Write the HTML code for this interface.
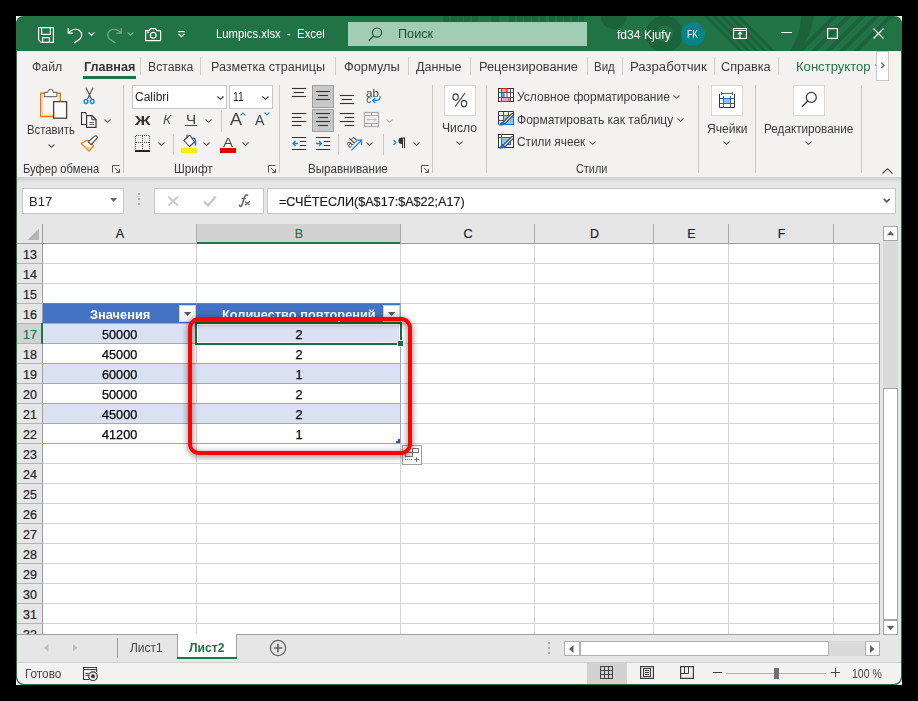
<!DOCTYPE html><html><head><meta charset="utf-8"><style>html,body{margin:0;padding:0;}body{width:918px;height:701px;overflow:hidden;background:#000;position:relative;font-family:"Liberation Sans",sans-serif;}svg{overflow:visible}</style></head><body><div style="position:absolute;left:16px;top:16px;width:886px;height:669px;background:#f2f2f2;"></div>
<div style="position:absolute;left:16px;top:16px;width:886px;height:669px;border-radius:8px;background:#217346;overflow:hidden"></div>
<div style="position:absolute;left:17px;top:51px;width:884px;height:633px;border-radius:0 0 7px 7px;background:#f3f2f1;overflow:hidden"></div>
<svg style="position:absolute;left:0;top:0" width="918" height="60"><defs><clipPath id="tb"><rect x="16" y="16" width="886" height="35"/></clipPath><clipPath id="tb2"><circle cx="735" cy="34" r="40"/></clipPath></defs><g clip-path="url(#tb)"><circle cx="613.7" cy="16" r="13" fill="#1c633b"/><circle cx="664.5" cy="34" r="13.5" fill="none" stroke="#1c633b" stroke-width="10"/><path d="M704 16 h4 l35 35 h-4 z" fill="#1c633b"/><path d="M712 16 h4 l35 35 h-4 z" fill="#1c633b"/><path d="M720 16 h4 l35 35 h-4 z" fill="#1c633b"/><path d="M728 16 h4 l35 35 h-4 z" fill="#1c633b"/><path d="M736 16 h4 l35 35 h-4 z" fill="#1c633b"/><path d="M801 16 h13 C812 30 806 42 800 51 h-10 C797 40 801 28 801 16 z" fill="#1c633b"/><path d="M832 16 h6 l-35 35 h-6 z" fill="#1c633b"/><path d="M846 16 h6 l-35 35 h-6 z" fill="#1c633b"/><path d="M860 16 h6 l-35 35 h-6 z" fill="#1c633b"/><path d="M874 16 h6 l-35 35 h-6 z" fill="#1c633b"/><path d="M888 16 h6 l-35 35 h-6 z" fill="#1c633b"/><rect x="443" y="16" width="6" height="6" fill="#1c633b" opacity="0.7"/><rect x="451" y="16" width="6" height="6" fill="#1c633b" opacity="0.7"/><rect x="458" y="16" width="5" height="6" fill="#1c633b" opacity="0.7"/><rect x="464" y="16" width="6" height="6" fill="#1c633b" opacity="0.7"/><rect x="472" y="16" width="6" height="6" fill="#1c633b" opacity="0.7"/><rect x="491" y="16" width="8" height="6" fill="#1c633b" opacity="0.7"/><rect x="509" y="16" width="6" height="6" fill="#1c633b" opacity="0.7"/><rect x="517" y="16" width="6" height="6" fill="#1c633b" opacity="0.7"/><rect x="524" y="16" width="7" height="6" fill="#1c633b" opacity="0.7"/><rect x="532" y="16" width="6" height="6" fill="#1c633b" opacity="0.7"/><rect x="540" y="16" width="6" height="6" fill="#1c633b" opacity="0.7"/><rect x="549" y="16" width="6" height="6" fill="#1c633b" opacity="0.7"/><rect x="557" y="16" width="6" height="6" fill="#1c633b" opacity="0.7"/><rect x="564" y="16" width="6" height="6" fill="#1c633b" opacity="0.7"/><rect x="572" y="16" width="6" height="6" fill="#1c633b" opacity="0.7"/><rect x="579" y="16" width="5" height="6" fill="#1c633b" opacity="0.7"/></g></svg>
<svg style="position:absolute;left:38px;top:27px;" width="17" height="17" viewBox="0 0 17 17"><path d="M0.6 0.6 H15.4 V15.4 H3.2 L0.6 12.8 Z" fill="none" stroke="#fff" stroke-width="1.2"/><path d="M3.6 0.6 V7.4 H12.4 V0.6 M4.6 15.4 V10.6 H11.4 V15.4" fill="none" stroke="#fff" stroke-width="1.2"/></svg>
<svg style="position:absolute;left:67px;top:27px;" width="16" height="17" viewBox="0 0 16 17"><path d="M1.2 1 V6.2 H6.2" fill="none" stroke="#fff" stroke-width="1.2"/><path d="M1.5 6 C4 2.5 9 1 12.5 3.5 C15.5 6 15 9.5 13 12 L7 16" fill="none" stroke="#fff" stroke-width="1.2"/></svg>
<svg style="position:absolute;left:88px;top:32px;" width="7" height="4" viewBox="0 0 7 4"><path d="M0.5 0.5 L3.5 3.2 L6.5 0.5" fill="none" stroke="#fff" stroke-width="1.1"/></svg>
<svg style="position:absolute;left:107px;top:27px;opacity:.8" width="16" height="17" viewBox="0 0 16 17"><path d="M14.3 1 V6.2 H9.3" fill="none" stroke="#8fbba0" stroke-width="1.2"/><path d="M14 6 C11.5 2.5 6.5 1 3 3.5 C0 6 0.5 9.5 2.5 12 L8.5 16" fill="none" stroke="#8fbba0" stroke-width="1.2"/></svg>
<svg style="position:absolute;left:127px;top:32px;" width="7" height="4" viewBox="0 0 7 4"><path d="M0.5 0.5 L3.5 3.2 L6.5 0.5" fill="none" stroke="#7fae92" stroke-width="1.1"/></svg>
<svg style="position:absolute;left:145px;top:28px;" width="17" height="14" viewBox="0 0 17 14"><path d="M0.6 2.6 H4 L5.5 0.6 H10.5 L12 2.6 H15.6 V12.6 H0.6 Z" fill="none" stroke="#fff" stroke-width="1.2"/><circle cx="8.2" cy="7.3" r="2.9" fill="none" stroke="#fff" stroke-width="1.3"/><rect x="2.3" y="3.6" width="1.6" height="1.6" fill="#fff"/></svg>
<svg style="position:absolute;left:178px;top:31px;" width="8" height="7" viewBox="0 0 8 7"><path d="M0 0.6 H7" stroke="#fff" stroke-width="1.2"/><path d="M0.6 2.8 L3.5 5.6 L6.4 2.8" fill="none" stroke="#fff" stroke-width="1.2"/></svg>
<div style="position:absolute;left:216.03px;top:28.42px;font-family:'Liberation Sans',sans-serif;font-size:12.5px;line-height:12.5px;font-weight:400;font-style:normal;color:#ffffff;white-space:pre;transform:scaleX(0.9050);transform-origin:0 0;">Lumpics.xlsx  -  Excel</div>
<div style="position:absolute;left:348px;top:22px;width:239px;height:24px;background:#a0cdb4;"></div>
<svg style="position:absolute;left:368px;top:27px;" width="15" height="15" viewBox="0 0 15 15"><circle cx="9" cy="5.6" r="4.6" fill="none" stroke="#1f5537" stroke-width="1.2"/><path d="M5.8 8.8 L0.8 13.8" stroke="#1f5537" stroke-width="1.3"/></svg>
<div style="position:absolute;left:398.23px;top:28.42px;font-family:'Liberation Sans',sans-serif;font-size:12.5px;line-height:12.5px;font-weight:400;font-style:normal;color:#1e4d33;white-space:pre;transform:scaleX(1.0147);transform-origin:0 0;">Поиск</div>
<div style="position:absolute;left:616.62px;top:29.32px;font-family:'Liberation Sans',sans-serif;font-size:12.5px;line-height:12.5px;font-weight:400;font-style:normal;color:#ffffff;white-space:pre;transform:scaleX(0.9668);transform-origin:0 0;">fd34 Kjufy</div>
<div style="position:absolute;left:681px;top:22px;width:24px;height:24px;border-radius:50%;background:#068387"></div>
<div style="position:absolute;left:687.48px;top:29.11px;font-family:'Liberation Sans',sans-serif;font-size:10.5px;line-height:10.5px;font-weight:400;font-style:normal;color:#eef8f8;white-space:pre;transform:scaleX(0.8292);transform-origin:0 0;">FK</div>
<svg style="position:absolute;left:733px;top:28px;" width="14" height="11" viewBox="0 0 14 11"><rect x="0.55" y="0.55" width="12.9" height="9.9" fill="none" stroke="#fff" stroke-width="1.1"/><path d="M0.5 2.5 H13.5" stroke="#fff" stroke-width="1"/><path d="M7 10 V4.3 M4.9 6.4 L7 4.3 L9.1 6.4" fill="none" stroke="#fff" stroke-width="1.1"/></svg>
<div style="position:absolute;left:781px;top:32px;width:11px;height:1px;background:#fff;"></div>
<svg style="position:absolute;left:827px;top:28px;" width="11" height="11" viewBox="0 0 11 11"><rect x="0.6" y="0.6" width="9.8" height="9.8" fill="none" stroke="#fff" stroke-width="1.2"/></svg>
<svg style="position:absolute;left:873px;top:28px;" width="11" height="11" viewBox="0 0 11 11"><path d="M0.5 0.5 L10.5 10.5 M10.5 0.5 L0.5 10.5" stroke="#fff" stroke-width="1.2"/></svg>
<div style="position:absolute;left:31.62px;top:61.42px;font-family:'Liberation Sans',sans-serif;font-size:12.5px;line-height:12.5px;font-weight:400;font-style:normal;color:#3b3b3b;white-space:pre;transform:scaleX(0.9842);transform-origin:0 0;">Файл</div>
<div style="position:absolute;left:83.62px;top:61.42px;font-family:'Liberation Sans',sans-serif;font-size:12.5px;line-height:12.5px;font-weight:700;font-style:normal;color:#333;white-space:pre;transform:scaleX(1.0080);transform-origin:0 0;">Главная</div>
<div style="position:absolute;left:83px;top:76px;width:53px;height:3px;background:#217346;"></div>
<div style="position:absolute;left:140px;top:57px;width:1px;height:18px;background:#d0d0d0;"></div>
<div style="position:absolute;left:200px;top:57px;width:1px;height:18px;background:#d0d0d0;"></div>
<div style="position:absolute;left:335px;top:57px;width:1px;height:18px;background:#d0d0d0;"></div>
<div style="position:absolute;left:408px;top:57px;width:1px;height:18px;background:#d0d0d0;"></div>
<div style="position:absolute;left:470px;top:57px;width:1px;height:18px;background:#d0d0d0;"></div>
<div style="position:absolute;left:587px;top:57px;width:1px;height:18px;background:#d0d0d0;"></div>
<div style="position:absolute;left:622px;top:57px;width:1px;height:18px;background:#d0d0d0;"></div>
<div style="position:absolute;left:714px;top:57px;width:1px;height:18px;background:#d0d0d0;"></div>
<div style="position:absolute;left:778px;top:57px;width:1px;height:18px;background:#d0d0d0;"></div>
<div style="position:absolute;left:147.62px;top:61.42px;font-family:'Liberation Sans',sans-serif;font-size:12.5px;line-height:12.5px;font-weight:400;font-style:normal;color:#3b3b3b;white-space:pre;transform:scaleX(0.9759);transform-origin:0 0;">Вставка</div>
<div style="position:absolute;left:211.03px;top:61.42px;font-family:'Liberation Sans',sans-serif;font-size:12.5px;line-height:12.5px;font-weight:400;font-style:normal;color:#3b3b3b;white-space:pre;transform:scaleX(1.0057);transform-origin:0 0;">Разметка страницы</div>
<div style="position:absolute;left:344.02px;top:61.42px;font-family:'Liberation Sans',sans-serif;font-size:12.5px;line-height:12.5px;font-weight:400;font-style:normal;color:#3b3b3b;white-space:pre;transform:scaleX(1.0247);transform-origin:0 0;">Формулы</div>
<div style="position:absolute;left:415.93px;top:61.42px;font-family:'Liberation Sans',sans-serif;font-size:12.5px;line-height:12.5px;font-weight:400;font-style:normal;color:#3b3b3b;white-space:pre;transform:scaleX(1.0062);transform-origin:0 0;">Данные</div>
<div style="position:absolute;left:479.02px;top:61.42px;font-family:'Liberation Sans',sans-serif;font-size:12.5px;line-height:12.5px;font-weight:400;font-style:normal;color:#3b3b3b;white-space:pre;transform:scaleX(1.0251);transform-origin:0 0;">Рецензирование</div>
<div style="position:absolute;left:594.23px;top:61.42px;font-family:'Liberation Sans',sans-serif;font-size:12.5px;line-height:12.5px;font-weight:400;font-style:normal;color:#3b3b3b;white-space:pre;transform:scaleX(0.9171);transform-origin:0 0;">Вид</div>
<div style="position:absolute;left:629.83px;top:61.42px;font-family:'Liberation Sans',sans-serif;font-size:12.5px;line-height:12.5px;font-weight:400;font-style:normal;color:#3b3b3b;white-space:pre;transform:scaleX(1.0514);transform-origin:0 0;">Разработчик</div>
<div style="position:absolute;left:721.12px;top:61.42px;font-family:'Liberation Sans',sans-serif;font-size:12.5px;line-height:12.5px;font-weight:400;font-style:normal;color:#3b3b3b;white-space:pre;transform:scaleX(1.0123);transform-origin:0 0;">Справка</div>
<div style="position:absolute;left:796.02px;top:61.42px;font-family:'Liberation Sans',sans-serif;font-size:12.5px;line-height:12.5px;font-weight:400;font-style:normal;color:#217346;white-space:pre;transform:scaleX(1.0459);transform-origin:0 0;">Конструктор</div>
<div style="position:absolute;left:875px;top:64px;width:2px;height:2px;background:#7fb095;"></div>
<div style="position:absolute;left:876px;top:51px;width:13px;height:30px;background:#ffffff;border:1px solid #c8c8c8;box-sizing:border-box;"></div>
<svg style="position:absolute;left:880px;top:62px;" width="6" height="7" viewBox="0 0 6 7"><path d="M1.2 0.6 L4 3.3 L1.2 6" fill="none" stroke="#555" stroke-width="1.2"/></svg>
<div style="position:absolute;left:123px;top:85px;width:1px;height:88px;background:#c8c8c8;"></div>
<div style="position:absolute;left:279px;top:85px;width:1px;height:88px;background:#c8c8c8;"></div>
<div style="position:absolute;left:432px;top:85px;width:1px;height:88px;background:#c8c8c8;"></div>
<div style="position:absolute;left:486px;top:85px;width:1px;height:88px;background:#c8c8c8;"></div>
<div style="position:absolute;left:698px;top:85px;width:1px;height:88px;background:#c8c8c8;"></div>
<div style="position:absolute;left:755px;top:85px;width:1px;height:88px;background:#c8c8c8;"></div>
<div style="position:absolute;left:861px;top:85px;width:1px;height:88px;background:#c8c8c8;"></div>
<div style="position:absolute;left:23.24px;top:163.44px;font-family:'Liberation Sans',sans-serif;font-size:12px;line-height:12px;font-weight:400;font-style:normal;color:#3b3b3b;white-space:pre;transform:scaleX(0.9335);transform-origin:0 0;">Буфер обмена</div>
<div style="position:absolute;left:174.24px;top:163.44px;font-family:'Liberation Sans',sans-serif;font-size:12px;line-height:12px;font-weight:400;font-style:normal;color:#3b3b3b;white-space:pre;transform:scaleX(0.9806);transform-origin:0 0;">Шрифт</div>
<div style="position:absolute;left:307.94px;top:163.44px;font-family:'Liberation Sans',sans-serif;font-size:12px;line-height:12px;font-weight:400;font-style:normal;color:#3b3b3b;white-space:pre;transform:scaleX(0.9662);transform-origin:0 0;">Выравнивание</div>
<div style="position:absolute;left:576.24px;top:163.44px;font-family:'Liberation Sans',sans-serif;font-size:12px;line-height:12px;font-weight:400;font-style:normal;color:#3b3b3b;white-space:pre;transform:scaleX(0.9087);transform-origin:0 0;">Стили</div>
<svg style="position:absolute;left:112px;top:165px;" width="9" height="9" viewBox="0 0 9 9"><path d="M0.5 7.5 V0.5 H7.5" fill="none" stroke="#555" stroke-width="1"/><path d="M3 3 L7.5 7.5 M4 7.5 H7.5 V4" fill="none" stroke="#555" stroke-width="1"/></svg>
<svg style="position:absolute;left:268px;top:165px;" width="9" height="9" viewBox="0 0 9 9"><path d="M0.5 7.5 V0.5 H7.5" fill="none" stroke="#555" stroke-width="1"/><path d="M3 3 L7.5 7.5 M4 7.5 H7.5 V4" fill="none" stroke="#555" stroke-width="1"/></svg>
<svg style="position:absolute;left:421px;top:165px;" width="9" height="9" viewBox="0 0 9 9"><path d="M0.5 7.5 V0.5 H7.5" fill="none" stroke="#555" stroke-width="1"/><path d="M3 3 L7.5 7.5 M4 7.5 H7.5 V4" fill="none" stroke="#555" stroke-width="1"/></svg>
<svg style="position:absolute;left:39px;top:88px;" width="30" height="33" viewBox="0 0 30 33"><rect x="1.7" y="5.2" width="19.6" height="23.3" fill="#f8f8f8" stroke="#e5740c" stroke-width="1.4"/><path d="M3.2 6.5 V27.2 H20 V6.5" fill="none" stroke="#f8d68a" stroke-width="1.4"/><path d="M5.4 8.6 V4.4 H8.6 Q9.6 1.3 11.6 1.3 Q13.6 1.3 14.6 4.4 H17.8 V8.6 Z" fill="#fff" stroke="#777" stroke-width="1.1"/><rect x="14.6" y="13.6" width="13" height="16.6" fill="#fafafa" stroke="#444" stroke-width="1.3"/></svg>
<div style="position:absolute;left:27.02px;top:124.12px;font-family:'Liberation Sans',sans-serif;font-size:12.5px;line-height:12.5px;font-weight:400;font-style:normal;color:#3b3b3b;white-space:pre;transform:scaleX(0.9028);transform-origin:0 0;">Вставить</div>
<svg style="position:absolute;left:48px;top:144px;" width="7" height="4" viewBox="0 0 7 4"><path d="M0.5 0.5 L3.5 3.3 L6.5 0.5" fill="none" stroke="#555" stroke-width="1.1"/></svg>
<svg style="position:absolute;left:83px;top:87px;" width="13" height="18" viewBox="0 0 13 18"><path d="M3 0.8 L8.6 12.3 M10 0.8 L4.4 12.3" stroke="#555" stroke-width="1.2"/><circle cx="3" cy="14.5" r="1.9" fill="#fff" stroke="#2b88d8" stroke-width="1.5"/><circle cx="9.2" cy="14.5" r="1.9" fill="#fff" stroke="#2b88d8" stroke-width="1.5"/></svg>
<svg style="position:absolute;left:80px;top:111px;" width="18" height="18" viewBox="0 0 18 18"><path d="M6.5 3.6 L5.5 1.5 H1.5 V13.5 H6" fill="none" stroke="#333" stroke-width="1.1"/><path d="M6.6 4.6 H12 L16 8.6 V16.4 H6.6 Z" fill="#fff" stroke="#333" stroke-width="1.2"/><path d="M11.8 4.6 V8.8 H16" fill="none" stroke="#333" stroke-width="1"/><path d="M9.5 11.5 H14 M9.5 13.5 H14" stroke="#555" stroke-width="1"/></svg>
<svg style="position:absolute;left:104px;top:119px;" width="7" height="4" viewBox="0 0 7 4"><path d="M0.5 0.5 L3.5 3.3 L6.5 0.5" fill="none" stroke="#555" stroke-width="1.1"/></svg>
<svg style="position:absolute;left:80px;top:135px;" width="19" height="18" viewBox="0 0 19 18"><path d="M1.3 8.4 L7.5 5 L13.6 10.8 L9 16 Z" fill="#fff" stroke="#e8861e" stroke-width="1.4" stroke-linejoin="round"/><path d="M5 12 L10 11.5 L9 15 Z" fill="#f7c98a"/><path d="M8.2 6.8 L14.6 1.2 Q16 0.2 17 1.4 Q17.8 2.6 16.6 3.6 L11.2 9.6 Z" fill="#fff" stroke="#444" stroke-width="1.1"/></svg>
<div style="position:absolute;left:132px;top:85px;width:95px;height:24px;background:#ffffff;border:1px solid #c6c6c6;box-sizing:border-box;"></div>
<div style="position:absolute;left:135.32px;top:91.42px;font-family:'Liberation Sans',sans-serif;font-size:12.5px;line-height:12.5px;font-weight:400;font-style:normal;color:#262626;white-space:pre;transform:scaleX(0.9608);transform-origin:0 0;">Calibri</div>
<svg style="position:absolute;left:217px;top:96px;" width="7" height="4" viewBox="0 0 7 4"><path d="M0.5 0.5 L3.5 3.3 L6.5 0.5" fill="none" stroke="#333" stroke-width="1.1"/></svg>
<div style="position:absolute;left:229px;top:85px;width:44px;height:24px;background:#ffffff;border:1px solid #c6c6c6;box-sizing:border-box;"></div>
<div style="position:absolute;left:232.62px;top:91.42px;font-family:'Liberation Sans',sans-serif;font-size:12.5px;line-height:12.5px;font-weight:400;font-style:normal;color:#262626;white-space:pre;transform:scaleX(0.8279);transform-origin:0 0;">11</div>
<svg style="position:absolute;left:262px;top:96px;" width="7" height="4" viewBox="0 0 7 4"><path d="M0.5 0.5 L3.5 3.3 L6.5 0.5" fill="none" stroke="#333" stroke-width="1.1"/></svg>
<div style="position:absolute;left:135.31px;top:113.50px;font-family:'Liberation Sans',sans-serif;font-size:13px;line-height:13px;font-weight:700;font-style:normal;color:#333;white-space:pre;transform:scaleX(1.3260);transform-origin:0 0;">Ж</div>
<div style="position:absolute;left:162.62px;top:113.92px;font-family:'Liberation Sans',sans-serif;font-size:12.5px;line-height:12.5px;font-weight:400;font-style:italic;color:#555;white-space:pre;transform:scaleX(1.1051);transform-origin:0 0;">К</div>
<div style="position:absolute;left:185.62px;top:113.92px;font-family:'Liberation Sans',sans-serif;font-size:12.5px;line-height:12.5px;font-weight:400;font-style:normal;color:#444;white-space:pre;transform:scaleX(1.2285);transform-origin:0 0;">Ч</div>
<div style="position:absolute;left:185px;top:125px;width:12px;height:1px;background:#444;"></div>
<svg style="position:absolute;left:205px;top:119px;" width="7" height="4" viewBox="0 0 7 4"><path d="M0.5 0.5 L3.5 3.3 L6.5 0.5" fill="none" stroke="#555" stroke-width="1.1"/></svg>
<div style="position:absolute;left:221px;top:110px;width:1px;height:22px;background:#c8c8c8;"></div>
<div style="position:absolute;left:229.50px;top:111.33px;font-family:'Liberation Sans',sans-serif;font-size:16.5px;line-height:16.5px;font-weight:400;font-style:normal;color:#444;white-space:pre;transform:scaleX(1.0885);transform-origin:0 0;">A</div>
<svg style="position:absolute;left:240px;top:112px;" width="6" height="4" viewBox="0 0 6 4"><path d="M0.5 3.5 L3 1 L5.5 3.5" fill="none" stroke="#2b88d8" stroke-width="1.1"/></svg>
<div style="position:absolute;left:255.37px;top:113.03px;font-family:'Liberation Sans',sans-serif;font-size:14.5px;line-height:14.5px;font-weight:400;font-style:normal;color:#444;white-space:pre;transform:scaleX(0.9688);transform-origin:0 0;">A</div>
<svg style="position:absolute;left:264px;top:112px;" width="6" height="4" viewBox="0 0 6 4"><path d="M0.5 0.5 L3 3 L5.5 0.5" fill="none" stroke="#2b88d8" stroke-width="1.1"/></svg>
<svg style="position:absolute;left:135px;top:135px;" width="16" height="17" viewBox="0 0 16 17"><g shape-rendering="crispEdges" fill="none" stroke="#444" stroke-width="1" stroke-dasharray="1 1"><path d="M0.5 1 V14 M14.5 1 V14 M1 0.5 H15 M7.5 1 V14 M1 7.5 H15"/></g><path d="M0 15.5 H15" stroke="#222" stroke-width="2" shape-rendering="crispEdges"/></svg>
<svg style="position:absolute;left:158px;top:142px;" width="7" height="4" viewBox="0 0 7 4"><path d="M0.5 0.5 L3.5 3.3 L6.5 0.5" fill="none" stroke="#555" stroke-width="1.1"/></svg>
<div style="position:absolute;left:173px;top:134px;width:1px;height:21px;background:#c8c8c8;"></div>
<svg style="position:absolute;left:181px;top:134px;" width="17" height="15" viewBox="0 0 17 15"><path d="M3 6.5 L7.5 2 Q8.5 0.8 9.5 2 L13.5 8 L8.5 12.5 Z" fill="#fff" stroke="#444" stroke-width="1.1" stroke-linejoin="round"/><path d="M6 3.5 V0.8" stroke="#444" stroke-width="1.1"/><path d="M10.5 4.5 Q13.5 3.5 14.5 6 V11.5" fill="none" stroke="#1f6fc5" stroke-width="1.4"/></svg>
<div style="position:absolute;left:181px;top:148px;width:16px;height:5px;background:#ffef00;"></div>
<svg style="position:absolute;left:203px;top:142px;" width="7" height="4" viewBox="0 0 7 4"><path d="M0.5 0.5 L3.5 3.3 L6.5 0.5" fill="none" stroke="#555" stroke-width="1.1"/></svg>
<div style="position:absolute;left:223.31px;top:135.70px;font-family:'Liberation Sans',sans-serif;font-size:13px;line-height:13px;font-weight:400;font-style:normal;color:#444;white-space:pre;transform:scaleX(1.1624);transform-origin:0 0;">A</div>
<div style="position:absolute;left:220px;top:148px;width:16px;height:5px;background:#e00000;"></div>
<svg style="position:absolute;left:242px;top:142px;" width="7" height="4" viewBox="0 0 7 4"><path d="M0.5 0.5 L3.5 3.3 L6.5 0.5" fill="none" stroke="#555" stroke-width="1.1"/></svg>
<div style="position:absolute;left:312px;top:85px;width:22px;height:23px;background:#c8c8c8;border:1px solid #9e9e9e;box-sizing:border-box;"></div>
<div style="position:absolute;left:312px;top:109px;width:22px;height:23px;background:#c8c8c8;border:1px solid #9e9e9e;box-sizing:border-box;"></div>
<svg style="position:absolute;left:292px;top:88px;" width="16" height="16" viewBox="0 0 16 16"><path d="M0 0.5 H14" stroke="#333" stroke-width="1.1"/><path d="M2 4.5 H12" stroke="#333" stroke-width="1.1"/><path d="M0 8.5 H14" stroke="#333" stroke-width="1.1"/></svg>
<svg style="position:absolute;left:316px;top:91px;" width="16" height="16" viewBox="0 0 16 16"><path d="M0 0.5 H14" stroke="#333" stroke-width="1.1"/><path d="M2 4.5 H12" stroke="#333" stroke-width="1.1"/><path d="M0 8.5 H14" stroke="#333" stroke-width="1.1"/></svg>
<svg style="position:absolute;left:340px;top:95px;" width="16" height="16" viewBox="0 0 16 16"><path d="M0 0.5 H14" stroke="#333" stroke-width="1.1"/><path d="M2 4.5 H12" stroke="#333" stroke-width="1.1"/><path d="M0 8.5 H14" stroke="#333" stroke-width="1.1"/></svg>
<div style="position:absolute;left:365.70px;top:88.53px;font-family:'Liberation Sans',sans-serif;font-size:10px;line-height:10px;font-weight:400;font-style:normal;color:#444;white-space:pre;transform:scaleX(1.1685);transform-origin:0 0;">ab</div>
<div style="position:absolute;left:366.30px;top:95.03px;font-family:'Liberation Sans',sans-serif;font-size:10px;line-height:10px;font-weight:400;font-style:normal;color:#444;white-space:pre;">c</div>
<svg style="position:absolute;left:370px;top:94px;" width="12" height="12" viewBox="0 0 12 12"><path d="M10 2 Q10.8 6.2 6.5 6.3 H3" fill="none" stroke="#1f7fd8" stroke-width="1.3"/><path d="M5.3 3.9 L2.7 6.3 L5.3 9" fill="none" stroke="#1f7fd8" stroke-width="1.3"/></svg>
<svg style="position:absolute;left:292px;top:113px;" width="16" height="16" viewBox="0 0 16 16"><path d="M0 0.5 H14" stroke="#333" stroke-width="1.1"/><path d="M0 4.5 H9" stroke="#333" stroke-width="1.1"/><path d="M0 8.5 H14" stroke="#333" stroke-width="1.1"/><path d="M0 12.5 H9" stroke="#333" stroke-width="1.1"/></svg>
<svg style="position:absolute;left:316px;top:113px;" width="16" height="16" viewBox="0 0 16 16"><path d="M0 0.5 H14" stroke="#333" stroke-width="1.1"/><path d="M2 4.5 H12" stroke="#333" stroke-width="1.1"/><path d="M0 8.5 H14" stroke="#333" stroke-width="1.1"/><path d="M2 12.5 H12" stroke="#333" stroke-width="1.1"/></svg>
<svg style="position:absolute;left:340px;top:113px;" width="16" height="16" viewBox="0 0 16 16"><path d="M0 0.5 H14" stroke="#333" stroke-width="1.1"/><path d="M5 4.5 H14" stroke="#333" stroke-width="1.1"/><path d="M0 8.5 H14" stroke="#333" stroke-width="1.1"/><path d="M5 12.5 H14" stroke="#333" stroke-width="1.1"/></svg>
<svg style="position:absolute;left:364px;top:112px;" width="16" height="16" viewBox="0 0 16 16"><rect x="0.5" y="0.5" width="14" height="14" fill="none" stroke="#a8a8a8" stroke-width="1.1"/><path d="M0.5 3.5 H14.5 M0.5 11.5 H14.5 M7.5 0.5 V3.5 M7.5 11.5 V14.5" fill="none" stroke="#a8a8a8" stroke-width="1"/><path d="M3 7.5 H12 M5 5.5 L3 7.5 L5 9.5 M10 5.5 L12 7.5 L10 9.5" fill="none" stroke="#c0c0c0" stroke-width="1"/></svg>
<svg style="position:absolute;left:386px;top:119px;" width="7" height="4" viewBox="0 0 7 4"><path d="M0.5 0.5 L3.5 3.3 L6.5 0.5" fill="none" stroke="#b0b0b0" stroke-width="1.1"/></svg>
<svg style="position:absolute;left:292px;top:136px;" width="15" height="15" viewBox="0 0 15 15"><path d="M0 1.5 H14 M8 5.5 H14 M8 9.5 H14 M0 13.5 H14" fill="none" stroke="#333" stroke-width="1.1"/><path d="M6 7.5 H1 M3.6 5 L1 7.5 L3.6 10" fill="none" stroke="#1f7fd8" stroke-width="1.3"/></svg>
<svg style="position:absolute;left:316px;top:136px;" width="15" height="15" viewBox="0 0 15 15"><path d="M0 1.5 H14 M8 5.5 H14 M8 9.5 H14 M0 13.5 H14" fill="none" stroke="#333" stroke-width="1.1"/><path d="M0 7.5 H5.5 M3 5 L5.6 7.5 L3 10" fill="none" stroke="#1f7fd8" stroke-width="1.3"/></svg>
<div style="position:absolute;left:338px;top:134px;width:1px;height:21px;background:#c8c8c8;"></div>
<svg style="position:absolute;left:345px;top:134px;" width="18" height="18" viewBox="0 0 18 18"><text x="0" y="0" font-family="Liberation Sans" font-size="10.5" fill="#444" transform="translate(4.5 14.5) rotate(-45)">ab</text><path d="M6.4 16.4 L16.2 6.6 M12 6.2 H16.5 V10.7" fill="none" stroke="#1f7fd8" stroke-width="1.3"/></svg>
<svg style="position:absolute;left:366px;top:142px;" width="7" height="4" viewBox="0 0 7 4"><path d="M0.5 0.5 L3.5 3.3 L6.5 0.5" fill="none" stroke="#555" stroke-width="1.1"/></svg>
<div style="position:absolute;left:383px;top:134px;width:1px;height:21px;background:#c8c8c8;"></div>
<svg style="position:absolute;left:393px;top:137px;" width="13" height="12" viewBox="0 0 13 12"><path d="M0.5 3 L3 5.5 L0.5 8" fill="none" stroke="#2b88d8" stroke-width="1.3"/><path d="M8 1 H12 M9.5 1 V11 M11.5 1 V11 M9 1 C5 1 5 6.5 9 6.5" fill="#333" stroke="#333" stroke-width="1.1"/></svg>
<svg style="position:absolute;left:413px;top:142px;" width="7" height="4" viewBox="0 0 7 4"><path d="M0.5 0.5 L3.5 3.3 L6.5 0.5" fill="none" stroke="#555" stroke-width="1.1"/></svg>
<div style="position:absolute;left:444px;top:85px;width:32px;height:31px;background:#ffffff;border:1px solid #d6d6d6;box-sizing:border-box;"></div>
<svg style="position:absolute;left:450px;top:90px;" width="20" height="20" viewBox="0 0 20 20"><ellipse cx="5.6" cy="7" rx="2.7" ry="3.2" fill="none" stroke="#404040" stroke-width="1.15"/><ellipse cx="14" cy="13.6" rx="2.7" ry="3.2" fill="none" stroke="#404040" stroke-width="1.15"/><path d="M5.2 16.6 L15 3" stroke="#404040" stroke-width="1.15"/></svg>
<div style="position:absolute;left:442.23px;top:122.22px;font-family:'Liberation Sans',sans-serif;font-size:12.5px;line-height:12.5px;font-weight:400;font-style:normal;color:#3b3b3b;white-space:pre;transform:scaleX(0.9749);transform-origin:0 0;">Число</div>
<svg style="position:absolute;left:456px;top:141px;" width="7" height="4" viewBox="0 0 7 4"><path d="M0.5 0.5 L3.5 3.3 L6.5 0.5" fill="none" stroke="#555" stroke-width="1.1"/></svg>
<svg style="position:absolute;left:498px;top:88px;" width="16" height="15" viewBox="0 0 16 15"><rect x="0.5" y="0.5" width="15" height="13" fill="#fff" stroke="#333"/><path d="M3.5 0.5 V13.5 M9 0.5 V13.5 M12.5 0.5 V13.5 M0.5 4.5 H15.5 M0.5 9.5 H15.5" stroke="#555" stroke-width="1"/><rect x="3.5" y="0.5" width="5.5" height="4" fill="#f5a3ab" stroke="#d42020"/><rect x="3.5" y="4.5" width="2.5" height="5" fill="#5ea9e8" stroke="#1f6fc5"/><rect x="3.5" y="9.5" width="7.5" height="4" fill="#f5a3ab" stroke="#d42020"/></svg>
<div style="position:absolute;left:517.12px;top:90.72px;font-family:'Liberation Sans',sans-serif;font-size:12.5px;line-height:12.5px;font-weight:400;font-style:normal;color:#3b3b3b;white-space:pre;transform:scaleX(0.9611);transform-origin:0 0;">Условное форматирование</div>
<svg style="position:absolute;left:673px;top:95px;" width="7" height="4" viewBox="0 0 7 4"><path d="M0.5 0.5 L3.5 3.3 L6.5 0.5" fill="none" stroke="#555" stroke-width="1.1"/></svg>
<svg style="position:absolute;left:498px;top:111px;" width="17" height="16" viewBox="0 0 17 16"><path d="M0.5 13.5 V0.5 H15.5 V5" fill="none" stroke="#333"/><path d="M0.5 4.5 H15.5 M0.5 9.5 H5 M5.5 0.5 V4.5 M10.5 0.5 V4.5" stroke="#555"/><rect x="5.5" y="4.5" width="10" height="9" fill="#8cc4f0" stroke="#1f6fc5"/><path d="M6.5 11.5 L14.5 3.5" stroke="#333" stroke-width="3.2" stroke-linecap="round"/><path d="M6.5 11.5 L14.5 3.5" stroke="#fff" stroke-width="1.2" stroke-linecap="round"/><path d="M1 14.5 C2 12 3 10.5 5.5 10.5 L7 12 C7 14 4 15 1 14.5 Z" fill="#1f6fc5"/></svg>
<div style="position:absolute;left:517.12px;top:113.62px;font-family:'Liberation Sans',sans-serif;font-size:12.5px;line-height:12.5px;font-weight:400;font-style:normal;color:#3b3b3b;white-space:pre;transform:scaleX(0.9607);transform-origin:0 0;">Форматировать как таблицу</div>
<svg style="position:absolute;left:677px;top:118px;" width="7" height="4" viewBox="0 0 7 4"><path d="M0.5 0.5 L3.5 3.3 L6.5 0.5" fill="none" stroke="#555" stroke-width="1.1"/></svg>
<svg style="position:absolute;left:498px;top:134px;" width="17" height="16" viewBox="0 0 17 16"><rect x="0.5" y="0.5" width="15" height="13" fill="#fff" stroke="#333"/><path d="M3.5 0.5 V13.5 M0.5 3.5 H15.5" stroke="#555"/><rect x="3.5" y="3.5" width="9" height="7" fill="#8cc4f0" stroke="#1f6fc5"/><path d="M6.5 11.5 L14.5 3.5" stroke="#333" stroke-width="3.2" stroke-linecap="round"/><path d="M6.5 11.5 L14.5 3.5" stroke="#fff" stroke-width="1.2" stroke-linecap="round"/><path d="M1 14.5 C2 12 3 10.5 5.5 10.5 L7 12 C7 14 4 15 1 14.5 Z" fill="#1f6fc5"/></svg>
<div style="position:absolute;left:517.12px;top:136.02px;font-family:'Liberation Sans',sans-serif;font-size:12.5px;line-height:12.5px;font-weight:400;font-style:normal;color:#3b3b3b;white-space:pre;transform:scaleX(0.9461);transform-origin:0 0;">Стили ячеек</div>
<svg style="position:absolute;left:589px;top:141px;" width="7" height="4" viewBox="0 0 7 4"><path d="M0.5 0.5 L3.5 3.3 L6.5 0.5" fill="none" stroke="#555" stroke-width="1.1"/></svg>
<div style="position:absolute;left:711px;top:85px;width:32px;height:31px;background:#ffffff;border:1px solid #d6d6d6;box-sizing:border-box;"></div>
<svg style="position:absolute;left:718px;top:91px;" width="18" height="18" viewBox="0 0 18 18"><path d="M4 2.5 H14 M3.5 1 V4 M14.5 1 V4" stroke="#1f6fc5" stroke-width="1"/><path d="M1.5 3 V16.5 H16.5 V3" fill="none" stroke="#333"/><path d="M1.5 7.5 H16.5 M1.5 12.5 H16.5 M5.5 5 V16.5 M12.5 5 V16.5" stroke="#555"/><rect x="5.5" y="7.5" width="7" height="5" fill="#8cc4f0" stroke="#1f6fc5"/></svg>
<div style="position:absolute;left:706.62px;top:122.52px;font-family:'Liberation Sans',sans-serif;font-size:12.5px;line-height:12.5px;font-weight:400;font-style:normal;color:#3b3b3b;white-space:pre;transform:scaleX(0.9645);transform-origin:0 0;">Ячейки</div>
<svg style="position:absolute;left:723px;top:141px;" width="7" height="4" viewBox="0 0 7 4"><path d="M0.5 0.5 L3.5 3.3 L6.5 0.5" fill="none" stroke="#555" stroke-width="1.1"/></svg>
<div style="position:absolute;left:793px;top:85px;width:32px;height:31px;background:#ffffff;border:1px solid #d6d6d6;box-sizing:border-box;"></div>
<svg style="position:absolute;left:801px;top:91px;" width="16" height="17" viewBox="0 0 16 17"><circle cx="10.3" cy="6.4" r="5" fill="none" stroke="#333" stroke-width="1.2"/><path d="M6.8 10 L1 15.8" stroke="#333" stroke-width="1.3"/></svg>
<div style="position:absolute;left:764.12px;top:122.52px;font-family:'Liberation Sans',sans-serif;font-size:12.5px;line-height:12.5px;font-weight:400;font-style:normal;color:#3b3b3b;white-space:pre;transform:scaleX(0.9372);transform-origin:0 0;">Редактирование</div>
<svg style="position:absolute;left:805px;top:141px;" width="7" height="4" viewBox="0 0 7 4"><path d="M0.5 0.5 L3.5 3.3 L6.5 0.5" fill="none" stroke="#555" stroke-width="1.1"/></svg>
<svg style="position:absolute;left:882px;top:168px;" width="11" height="6" viewBox="0 0 11 6"><path d="M0.5 5.5 L5.5 0.7 L10.5 5.5" fill="none" stroke="#444" stroke-width="1.1"/></svg>
<div style="position:absolute;left:17px;top:177px;width:884px;height:67px;background:#e6e6e6;"></div>
<div style="position:absolute;left:17px;top:177px;width:884px;height:6px;background:linear-gradient(#cfcfcf,#e6e6e6)"></div>
<div style="position:absolute;left:22px;top:188px;width:102px;height:26px;background:#ffffff;border:1px solid #c6c6c6;box-sizing:border-box;"></div>
<div style="position:absolute;left:29.12px;top:196.02px;font-family:'Liberation Sans',sans-serif;font-size:12.5px;line-height:12.5px;font-weight:400;font-style:normal;color:#262626;white-space:pre;transform:scaleX(1.0449);transform-origin:0 0;">B17</div>
<svg style="position:absolute;left:110px;top:198px;" width="8" height="5" viewBox="0 0 8 5"><path d="M0 0 H7.2 L3.6 4 Z" fill="#666"/></svg>
<div style="position:absolute;left:138px;top:193px;width:2px;height:2px;background:#a8a8a8;"></div>
<div style="position:absolute;left:138px;top:198px;width:2px;height:2px;background:#a8a8a8;"></div>
<div style="position:absolute;left:138px;top:203px;width:2px;height:2px;background:#a8a8a8;"></div>
<div style="position:absolute;left:154px;top:188px;width:110px;height:26px;background:#ffffff;border:1px solid #c6c6c6;box-sizing:border-box;"></div>
<svg style="position:absolute;left:166px;top:195px;" width="14" height="12" viewBox="0 0 14 12"><path d="M2.2 1.6 L12 10.6 M12 1.6 L2.2 10.6" stroke="#c6c6c6" stroke-width="1.8"/></svg>
<svg style="position:absolute;left:201px;top:194px;" width="17" height="14" viewBox="0 0 17 14"><path d="M3 7.5 L7 11.6 L14.6 2.4" fill="none" stroke="#c6c6c6" stroke-width="2.3"/></svg>
<svg style="position:absolute;left:236px;top:192px;" width="18" height="18" viewBox="0 0 18 18"><path d="M3.5 13.3 Q4.5 15.5 6 13 L8.8 4.5 Q9.6 2.3 11.5 3.3" fill="none" stroke="#6a6a6a" stroke-width="1.7" stroke-linecap="round"/><path d="M5.5 6.5 H10" stroke="#6a6a6a" stroke-width="1.2"/><path d="M9 9.5 L13.5 13 M14 9.2 L9 13.2" stroke="#6a6a6a" stroke-width="1.3"/></svg>
<div style="position:absolute;left:267px;top:188px;width:629px;height:26px;background:#ffffff;border:1px solid #c6c6c6;box-sizing:border-box;"></div>
<div style="position:absolute;left:278.62px;top:196.02px;font-family:'Liberation Sans',sans-serif;font-size:12.5px;line-height:12.5px;font-weight:400;font-style:normal;color:#1a1a1a;white-space:pre;transform:scaleX(1.0086);transform-origin:0 0;-webkit-text-stroke:0.15px #1a1a1a;">=СЧЁТЕСЛИ($A$17:$A$22;A17)</div>
<svg style="position:absolute;left:883px;top:198px;" width="9" height="6" viewBox="0 0 9 6"><path d="M0.8 0.8 L3.8 3.9 L6.8 0.8" fill="none" stroke="#5a5a5a" stroke-width="1.7"/></svg>
<div style="position:absolute;left:43px;top:244px;width:836px;height:390px;background:#ffffff;"></div>
<div style="position:absolute;left:17px;top:224px;width:862px;height:19px;background:#e6e6e6;"></div>
<div style="position:absolute;left:197px;top:224px;width:203px;height:18px;background:#d2d2d2;"></div>
<div style="position:absolute;left:17px;top:244px;width:25px;height:390px;background:#e6e6e6;"></div>
<div style="position:absolute;left:17px;top:324px;width:24px;height:19px;background:#d2d2d2;"></div>
<svg style="position:absolute;left:27px;top:228px;" width="13" height="13" viewBox="0 0 13 13"><path d="M12 0.5 V12 H0.5 Z" fill="#b4b4b4"/></svg>
<div style="position:absolute;left:43px;top:263px;width:836px;height:1px;background:#d4d4d4;"></div>
<div style="position:absolute;left:17px;top:263px;width:25px;height:1px;background:#b4b4b4;"></div>
<div style="position:absolute;left:43px;top:283px;width:836px;height:1px;background:#d4d4d4;"></div>
<div style="position:absolute;left:17px;top:283px;width:25px;height:1px;background:#b4b4b4;"></div>
<div style="position:absolute;left:43px;top:303px;width:836px;height:1px;background:#d4d4d4;"></div>
<div style="position:absolute;left:17px;top:303px;width:25px;height:1px;background:#b4b4b4;"></div>
<div style="position:absolute;left:43px;top:323px;width:836px;height:1px;background:#d4d4d4;"></div>
<div style="position:absolute;left:17px;top:323px;width:25px;height:1px;background:#b4b4b4;"></div>
<div style="position:absolute;left:43px;top:343px;width:836px;height:1px;background:#d4d4d4;"></div>
<div style="position:absolute;left:17px;top:343px;width:25px;height:1px;background:#b4b4b4;"></div>
<div style="position:absolute;left:43px;top:363px;width:836px;height:1px;background:#d4d4d4;"></div>
<div style="position:absolute;left:17px;top:363px;width:25px;height:1px;background:#b4b4b4;"></div>
<div style="position:absolute;left:43px;top:383px;width:836px;height:1px;background:#d4d4d4;"></div>
<div style="position:absolute;left:17px;top:383px;width:25px;height:1px;background:#b4b4b4;"></div>
<div style="position:absolute;left:43px;top:403px;width:836px;height:1px;background:#d4d4d4;"></div>
<div style="position:absolute;left:17px;top:403px;width:25px;height:1px;background:#b4b4b4;"></div>
<div style="position:absolute;left:43px;top:423px;width:836px;height:1px;background:#d4d4d4;"></div>
<div style="position:absolute;left:17px;top:423px;width:25px;height:1px;background:#b4b4b4;"></div>
<div style="position:absolute;left:43px;top:443px;width:836px;height:1px;background:#d4d4d4;"></div>
<div style="position:absolute;left:17px;top:443px;width:25px;height:1px;background:#b4b4b4;"></div>
<div style="position:absolute;left:43px;top:463px;width:836px;height:1px;background:#d4d4d4;"></div>
<div style="position:absolute;left:17px;top:463px;width:25px;height:1px;background:#b4b4b4;"></div>
<div style="position:absolute;left:43px;top:483px;width:836px;height:1px;background:#d4d4d4;"></div>
<div style="position:absolute;left:17px;top:483px;width:25px;height:1px;background:#b4b4b4;"></div>
<div style="position:absolute;left:43px;top:503px;width:836px;height:1px;background:#d4d4d4;"></div>
<div style="position:absolute;left:17px;top:503px;width:25px;height:1px;background:#b4b4b4;"></div>
<div style="position:absolute;left:43px;top:523px;width:836px;height:1px;background:#d4d4d4;"></div>
<div style="position:absolute;left:17px;top:523px;width:25px;height:1px;background:#b4b4b4;"></div>
<div style="position:absolute;left:43px;top:543px;width:836px;height:1px;background:#d4d4d4;"></div>
<div style="position:absolute;left:17px;top:543px;width:25px;height:1px;background:#b4b4b4;"></div>
<div style="position:absolute;left:43px;top:563px;width:836px;height:1px;background:#d4d4d4;"></div>
<div style="position:absolute;left:17px;top:563px;width:25px;height:1px;background:#b4b4b4;"></div>
<div style="position:absolute;left:43px;top:583px;width:836px;height:1px;background:#d4d4d4;"></div>
<div style="position:absolute;left:17px;top:583px;width:25px;height:1px;background:#b4b4b4;"></div>
<div style="position:absolute;left:43px;top:603px;width:836px;height:1px;background:#d4d4d4;"></div>
<div style="position:absolute;left:17px;top:603px;width:25px;height:1px;background:#b4b4b4;"></div>
<div style="position:absolute;left:43px;top:623px;width:836px;height:1px;background:#d4d4d4;"></div>
<div style="position:absolute;left:17px;top:623px;width:25px;height:1px;background:#b4b4b4;"></div>
<div style="position:absolute;left:196px;top:244px;width:1px;height:390px;background:#d4d4d4;"></div>
<div style="position:absolute;left:196px;top:224px;width:1px;height:19px;background:#ababab;"></div>
<div style="position:absolute;left:400px;top:244px;width:1px;height:390px;background:#d4d4d4;"></div>
<div style="position:absolute;left:400px;top:224px;width:1px;height:19px;background:#ababab;"></div>
<div style="position:absolute;left:534px;top:244px;width:1px;height:390px;background:#d4d4d4;"></div>
<div style="position:absolute;left:534px;top:224px;width:1px;height:19px;background:#ababab;"></div>
<div style="position:absolute;left:653px;top:244px;width:1px;height:390px;background:#d4d4d4;"></div>
<div style="position:absolute;left:653px;top:224px;width:1px;height:19px;background:#ababab;"></div>
<div style="position:absolute;left:728px;top:244px;width:1px;height:390px;background:#d4d4d4;"></div>
<div style="position:absolute;left:728px;top:224px;width:1px;height:19px;background:#ababab;"></div>
<div style="position:absolute;left:833px;top:244px;width:1px;height:390px;background:#d4d4d4;"></div>
<div style="position:absolute;left:833px;top:224px;width:1px;height:19px;background:#ababab;"></div>
<div style="position:absolute;left:42px;top:224px;width:1px;height:410px;background:#9e9e9e;"></div>
<div style="position:absolute;left:17px;top:243px;width:862px;height:1px;background:#9e9e9e;"></div>
<div style="position:absolute;left:197px;top:242px;width:203px;height:2px;background:#217346;"></div>
<div style="position:absolute;left:41px;top:323px;width:2px;height:21px;background:#217346;"></div>
<div style="position:absolute;left:879px;top:243px;width:1px;height:392px;background:#a0a0a0;"></div>
<div style="position:absolute;left:17px;top:634px;width:863px;height:1px;background:#a0a0a0;"></div>
<div style="position:absolute;left:115.83px;top:227.72px;font-family:'Liberation Sans',sans-serif;font-size:12.5px;line-height:12.5px;font-weight:400;font-style:normal;color:#222;white-space:pre;-webkit-text-stroke:0.2px #222;">A</div>
<div style="position:absolute;left:294.83px;top:227.72px;font-family:'Liberation Sans',sans-serif;font-size:12.5px;line-height:12.5px;font-weight:400;font-style:normal;color:#217346;white-space:pre;-webkit-text-stroke:0.2px #217346;">B</div>
<div style="position:absolute;left:463.48px;top:227.72px;font-family:'Liberation Sans',sans-serif;font-size:12.5px;line-height:12.5px;font-weight:400;font-style:normal;color:#222;white-space:pre;-webkit-text-stroke:0.2px #222;">C</div>
<div style="position:absolute;left:589.98px;top:227.72px;font-family:'Liberation Sans',sans-serif;font-size:12.5px;line-height:12.5px;font-weight:400;font-style:normal;color:#222;white-space:pre;-webkit-text-stroke:0.2px #222;">D</div>
<div style="position:absolute;left:687.33px;top:227.72px;font-family:'Liberation Sans',sans-serif;font-size:12.5px;line-height:12.5px;font-weight:400;font-style:normal;color:#222;white-space:pre;-webkit-text-stroke:0.2px #222;">E</div>
<div style="position:absolute;left:777.68px;top:227.72px;font-family:'Liberation Sans',sans-serif;font-size:12.5px;line-height:12.5px;font-weight:400;font-style:normal;color:#222;white-space:pre;-webkit-text-stroke:0.2px #222;">F</div>
<div style="position:absolute;left:23.05px;top:248.82px;font-family:'Liberation Sans',sans-serif;font-size:12.5px;line-height:12.5px;font-weight:400;font-style:normal;color:#222;white-space:pre;-webkit-text-stroke:0.2px #222;">13</div>
<div style="position:absolute;left:23.05px;top:268.82px;font-family:'Liberation Sans',sans-serif;font-size:12.5px;line-height:12.5px;font-weight:400;font-style:normal;color:#222;white-space:pre;-webkit-text-stroke:0.2px #222;">14</div>
<div style="position:absolute;left:23.05px;top:288.82px;font-family:'Liberation Sans',sans-serif;font-size:12.5px;line-height:12.5px;font-weight:400;font-style:normal;color:#222;white-space:pre;-webkit-text-stroke:0.2px #222;">15</div>
<div style="position:absolute;left:23.05px;top:308.82px;font-family:'Liberation Sans',sans-serif;font-size:12.5px;line-height:12.5px;font-weight:400;font-style:normal;color:#222;white-space:pre;-webkit-text-stroke:0.2px #222;">16</div>
<div style="position:absolute;left:23.05px;top:328.82px;font-family:'Liberation Sans',sans-serif;font-size:12.5px;line-height:12.5px;font-weight:400;font-style:normal;color:#217346;white-space:pre;-webkit-text-stroke:0.2px #217346;">17</div>
<div style="position:absolute;left:23.05px;top:348.82px;font-family:'Liberation Sans',sans-serif;font-size:12.5px;line-height:12.5px;font-weight:400;font-style:normal;color:#222;white-space:pre;-webkit-text-stroke:0.2px #222;">18</div>
<div style="position:absolute;left:23.05px;top:368.82px;font-family:'Liberation Sans',sans-serif;font-size:12.5px;line-height:12.5px;font-weight:400;font-style:normal;color:#222;white-space:pre;-webkit-text-stroke:0.2px #222;">19</div>
<div style="position:absolute;left:23.05px;top:388.82px;font-family:'Liberation Sans',sans-serif;font-size:12.5px;line-height:12.5px;font-weight:400;font-style:normal;color:#222;white-space:pre;-webkit-text-stroke:0.2px #222;">20</div>
<div style="position:absolute;left:23.05px;top:408.82px;font-family:'Liberation Sans',sans-serif;font-size:12.5px;line-height:12.5px;font-weight:400;font-style:normal;color:#222;white-space:pre;-webkit-text-stroke:0.2px #222;">21</div>
<div style="position:absolute;left:23.05px;top:428.82px;font-family:'Liberation Sans',sans-serif;font-size:12.5px;line-height:12.5px;font-weight:400;font-style:normal;color:#222;white-space:pre;-webkit-text-stroke:0.2px #222;">22</div>
<div style="position:absolute;left:23.05px;top:448.82px;font-family:'Liberation Sans',sans-serif;font-size:12.5px;line-height:12.5px;font-weight:400;font-style:normal;color:#222;white-space:pre;-webkit-text-stroke:0.2px #222;">23</div>
<div style="position:absolute;left:23.05px;top:468.82px;font-family:'Liberation Sans',sans-serif;font-size:12.5px;line-height:12.5px;font-weight:400;font-style:normal;color:#222;white-space:pre;-webkit-text-stroke:0.2px #222;">24</div>
<div style="position:absolute;left:23.05px;top:488.82px;font-family:'Liberation Sans',sans-serif;font-size:12.5px;line-height:12.5px;font-weight:400;font-style:normal;color:#222;white-space:pre;-webkit-text-stroke:0.2px #222;">25</div>
<div style="position:absolute;left:23.05px;top:508.82px;font-family:'Liberation Sans',sans-serif;font-size:12.5px;line-height:12.5px;font-weight:400;font-style:normal;color:#222;white-space:pre;-webkit-text-stroke:0.2px #222;">26</div>
<div style="position:absolute;left:23.05px;top:528.82px;font-family:'Liberation Sans',sans-serif;font-size:12.5px;line-height:12.5px;font-weight:400;font-style:normal;color:#222;white-space:pre;-webkit-text-stroke:0.2px #222;">27</div>
<div style="position:absolute;left:23.05px;top:548.82px;font-family:'Liberation Sans',sans-serif;font-size:12.5px;line-height:12.5px;font-weight:400;font-style:normal;color:#222;white-space:pre;-webkit-text-stroke:0.2px #222;">28</div>
<div style="position:absolute;left:23.05px;top:568.82px;font-family:'Liberation Sans',sans-serif;font-size:12.5px;line-height:12.5px;font-weight:400;font-style:normal;color:#222;white-space:pre;-webkit-text-stroke:0.2px #222;">29</div>
<div style="position:absolute;left:23.05px;top:588.82px;font-family:'Liberation Sans',sans-serif;font-size:12.5px;line-height:12.5px;font-weight:400;font-style:normal;color:#222;white-space:pre;-webkit-text-stroke:0.2px #222;">30</div>
<div style="position:absolute;left:23.05px;top:608.82px;font-family:'Liberation Sans',sans-serif;font-size:12.5px;line-height:12.5px;font-weight:400;font-style:normal;color:#222;white-space:pre;-webkit-text-stroke:0.2px #222;">31</div>
<div style="position:absolute;left:23.05px;top:628.82px;font-family:'Liberation Sans',sans-serif;font-size:12.5px;line-height:12.5px;font-weight:400;font-style:normal;color:#222;white-space:pre;-webkit-text-stroke:0.2px #222;">32</div>
<div style="position:absolute;left:43px;top:303px;width:357px;height:20px;background:#4472c4;"></div>
<div style="position:absolute;left:43px;top:303px;width:357px;height:1px;background:#5b84cc;"></div>
<div style="position:absolute;left:43px;top:324px;width:357px;height:19px;background:#d9e1f2;"></div>
<div style="position:absolute;left:43px;top:343px;width:357px;height:1px;background:#8ea9db;"></div>
<div style="position:absolute;left:43px;top:363px;width:357px;height:1px;background:#8ea9db;"></div>
<div style="position:absolute;left:43px;top:364px;width:357px;height:19px;background:#d9e1f2;"></div>
<div style="position:absolute;left:43px;top:383px;width:357px;height:1px;background:#8ea9db;"></div>
<div style="position:absolute;left:43px;top:403px;width:357px;height:1px;background:#8ea9db;"></div>
<div style="position:absolute;left:43px;top:404px;width:357px;height:19px;background:#d9e1f2;"></div>
<div style="position:absolute;left:43px;top:423px;width:357px;height:1px;background:#8ea9db;"></div>
<div style="position:absolute;left:43px;top:443px;width:357px;height:1px;background:#8ea9db;"></div>
<div style="position:absolute;left:43px;top:323px;width:357px;height:1px;background:#8ea9db;"></div>
<div style="position:absolute;left:400px;top:303px;width:1px;height:141px;background:#8ea9db;"></div>
<div style="position:absolute;left:89.83px;top:309.32px;font-family:'Liberation Sans',sans-serif;font-size:12.5px;line-height:12.5px;font-weight:700;font-style:normal;color:#ffffff;white-space:pre;transform:scaleX(1.0270);transform-origin:0 0;">Значения</div>
<div style="position:absolute;left:222.03px;top:309.32px;font-family:'Liberation Sans',sans-serif;font-size:12.5px;line-height:12.5px;font-weight:700;font-style:normal;color:#ffffff;white-space:pre;transform:scaleX(1.0240);transform-origin:0 0;">Количество повторений</div>
<div style="position:absolute;left:179px;top:305px;width:17px;height:17px;background:#f7f7f7;border:1px solid #d0d0d0;box-sizing:border-box;background:linear-gradient(#fff,#efefef);"></div>
<svg style="position:absolute;left:184px;top:312px;" width="8" height="5" viewBox="0 0 8 5"><path d="M0 0 H7.2 L3.6 4 Z" fill="#555"/></svg>
<div style="position:absolute;left:383px;top:305px;width:17px;height:17px;background:#f7f7f7;border:1px solid #d0d0d0;box-sizing:border-box;background:linear-gradient(#fff,#efefef);"></div>
<svg style="position:absolute;left:388px;top:312px;" width="8" height="5" viewBox="0 0 8 5"><path d="M0 0 H7.2 L3.6 4 Z" fill="#555"/></svg>
<div style="position:absolute;left:101.92px;top:329.42px;font-family:'Liberation Sans',sans-serif;font-size:12.5px;line-height:12.5px;font-weight:400;font-style:normal;color:#000;white-space:pre;transform:scaleX(1.0139);transform-origin:0 0;-webkit-text-stroke:0.25px #000;">50000</div>
<div style="position:absolute;left:295.52px;top:329.42px;font-family:'Liberation Sans',sans-serif;font-size:12.5px;line-height:12.5px;font-weight:400;font-style:normal;color:#000;white-space:pre;-webkit-text-stroke:0.25px #000;">2</div>
<div style="position:absolute;left:101.92px;top:349.42px;font-family:'Liberation Sans',sans-serif;font-size:12.5px;line-height:12.5px;font-weight:400;font-style:normal;color:#000;white-space:pre;transform:scaleX(1.0139);transform-origin:0 0;-webkit-text-stroke:0.25px #000;">45000</div>
<div style="position:absolute;left:295.52px;top:349.42px;font-family:'Liberation Sans',sans-serif;font-size:12.5px;line-height:12.5px;font-weight:400;font-style:normal;color:#000;white-space:pre;-webkit-text-stroke:0.25px #000;">2</div>
<div style="position:absolute;left:101.92px;top:369.42px;font-family:'Liberation Sans',sans-serif;font-size:12.5px;line-height:12.5px;font-weight:400;font-style:normal;color:#000;white-space:pre;transform:scaleX(1.0139);transform-origin:0 0;-webkit-text-stroke:0.25px #000;">60000</div>
<div style="position:absolute;left:295.52px;top:369.42px;font-family:'Liberation Sans',sans-serif;font-size:12.5px;line-height:12.5px;font-weight:400;font-style:normal;color:#000;white-space:pre;-webkit-text-stroke:0.25px #000;">1</div>
<div style="position:absolute;left:101.92px;top:389.42px;font-family:'Liberation Sans',sans-serif;font-size:12.5px;line-height:12.5px;font-weight:400;font-style:normal;color:#000;white-space:pre;transform:scaleX(1.0139);transform-origin:0 0;-webkit-text-stroke:0.25px #000;">50000</div>
<div style="position:absolute;left:295.52px;top:389.42px;font-family:'Liberation Sans',sans-serif;font-size:12.5px;line-height:12.5px;font-weight:400;font-style:normal;color:#000;white-space:pre;-webkit-text-stroke:0.25px #000;">2</div>
<div style="position:absolute;left:101.92px;top:409.42px;font-family:'Liberation Sans',sans-serif;font-size:12.5px;line-height:12.5px;font-weight:400;font-style:normal;color:#000;white-space:pre;transform:scaleX(1.0139);transform-origin:0 0;-webkit-text-stroke:0.25px #000;">45000</div>
<div style="position:absolute;left:295.52px;top:409.42px;font-family:'Liberation Sans',sans-serif;font-size:12.5px;line-height:12.5px;font-weight:400;font-style:normal;color:#000;white-space:pre;-webkit-text-stroke:0.25px #000;">2</div>
<div style="position:absolute;left:101.92px;top:429.42px;font-family:'Liberation Sans',sans-serif;font-size:12.5px;line-height:12.5px;font-weight:400;font-style:normal;color:#000;white-space:pre;transform:scaleX(1.0139);transform-origin:0 0;-webkit-text-stroke:0.25px #000;">41200</div>
<div style="position:absolute;left:295.52px;top:429.42px;font-family:'Liberation Sans',sans-serif;font-size:12.5px;line-height:12.5px;font-weight:400;font-style:normal;color:#000;white-space:pre;-webkit-text-stroke:0.25px #000;">1</div>
<svg style="position:absolute;left:396px;top:439px;" width="4" height="4" viewBox="0 0 4 4"><path d="M2 0 H4 V4 H0 V2 H2 Z" fill="#3552b5" shape-rendering="crispEdges"/></svg>
<div style="position:absolute;left:197px;top:324px;width:203px;height:19px;background:transparent;border:1px solid #fff;box-sizing:border-box;"></div>
<div style="position:absolute;left:195px;top:322px;width:207px;height:23px;background:transparent;border:2px solid #1e6b3f;box-sizing:border-box;"></div>
<div style="position:absolute;left:398px;top:341px;width:5px;height:5px;background:#1e6b3f;outline:1px solid #fff;"></div>
<div style="position:absolute;left:402px;top:445px;width:20px;height:20px;background:#ffffff;border:1px solid #9e9e9e;box-sizing:border-box;"></div>
<svg style="position:absolute;left:404px;top:447px;" width="16" height="16" viewBox="0 0 16 16"><rect x="8.5" y="1.5" width="6" height="4" fill="#fff" stroke="#777"/><rect x="1.5" y="5.5" width="7" height="4" fill="#eee" stroke="#777"/><path d="M1 12.5 H2 M3 12.5 H4 M5 12.5 H6 M7 12.5 H8 M1 10 H2" stroke="#888"/><path d="M10 12.5 H15 M12.5 10 V15" stroke="#777" stroke-width="1.1"/></svg>
<svg style="position:absolute;left:0;top:0" width="918" height="701"><defs><filter id="sh" x="-20%" y="-20%" width="140%" height="140%"><feDropShadow dx="0" dy="1.5" stdDeviation="3" flood-color="#000" flood-opacity="0.6"/></filter></defs><rect x="190" y="319" width="220" height="134" rx="9" ry="9" fill="none" stroke="#ff0000" stroke-width="4" filter="url(#sh)"/></svg>
<div style="position:absolute;left:880px;top:224px;width:21px;height:411px;background:#e6e6e6;"></div>
<div style="position:absolute;left:883px;top:241px;width:15px;height:379px;background:#dadada;"></div>
<div style="position:absolute;left:883px;top:226px;width:15px;height:15px;background:#ffffff;border:1px solid #a6a6a6;box-sizing:border-box;"></div>
<svg style="position:absolute;left:887px;top:231px;" width="8" height="5" viewBox="0 0 8 5"><path d="M0 4.2 H7.2 L3.6 0 Z" fill="#606060"/></svg>
<div style="position:absolute;left:883px;top:388px;width:15px;height:232px;background:#ffffff;border:1px solid #a6a6a6;box-sizing:border-box;"></div>
<div style="position:absolute;left:883px;top:620px;width:15px;height:15px;background:#ffffff;border:1px solid #a6a6a6;box-sizing:border-box;"></div>
<svg style="position:absolute;left:887px;top:626px;" width="8" height="5" viewBox="0 0 8 5"><path d="M0 0 H7.2 L3.6 4.2 Z" fill="#606060"/></svg>
<div style="position:absolute;left:17px;top:635px;width:884px;height:28px;background:#e6e6e6;"></div>
<div style="position:absolute;left:17px;top:634px;width:863px;height:1px;background:#a0a0a0;"></div>
<svg style="position:absolute;left:44px;top:644px;" width="5" height="8" viewBox="0 0 5 8"><path d="M4.5 0 V7.5 L0 3.75 Z" fill="#bdbdbd"/></svg>
<svg style="position:absolute;left:73px;top:644px;" width="5" height="8" viewBox="0 0 5 8"><path d="M0 0 V7.5 L4.5 3.75 Z" fill="#bdbdbd"/></svg>
<div style="position:absolute;left:117px;top:638px;width:1px;height:20px;background:#9e9e9e;"></div>
<div style="position:absolute;left:130.12px;top:642.02px;font-family:'Liberation Sans',sans-serif;font-size:12.5px;line-height:12.5px;font-weight:400;font-style:normal;color:#444;white-space:pre;transform:scaleX(0.9568);transform-origin:0 0;">Лист1</div>
<div style="position:absolute;left:177px;top:634px;width:60px;height:25px;background:#ffffff;border-left:1px solid #a0a0a0;border-right:1px solid #a0a0a0;box-sizing:border-box;"></div>
<div style="position:absolute;left:177px;top:657px;width:60px;height:2px;background:#217346;"></div>
<div style="position:absolute;left:188.93px;top:642.02px;font-family:'Liberation Sans',sans-serif;font-size:12.5px;line-height:12.5px;font-weight:700;font-style:normal;color:#217346;white-space:pre;transform:scaleX(0.9716);transform-origin:0 0;">Лист2</div>
<svg style="position:absolute;left:269px;top:639px;" width="18" height="18" viewBox="0 0 18 18"><circle cx="9" cy="9" r="7.6" fill="none" stroke="#666" stroke-width="1.3"/><path d="M9 4.8 V13.2 M4.8 9 H13.2" stroke="#666" stroke-width="1.7"/></svg>
<div style="position:absolute;left:548px;top:642px;width:2px;height:2px;background:#a8a8a8;"></div>
<div style="position:absolute;left:548px;top:647px;width:2px;height:2px;background:#a8a8a8;"></div>
<div style="position:absolute;left:548px;top:652px;width:2px;height:2px;background:#a8a8a8;"></div>
<div style="position:absolute;left:564px;top:641px;width:16px;height:15px;background:#ffffff;border:1px solid #b0b0b0;box-sizing:border-box;"></div>
<svg style="position:absolute;left:569px;top:645px;" width="5" height="8" viewBox="0 0 5 8"><path d="M4.5 0 V8 L0 4 Z" fill="#606060"/></svg>
<div style="position:absolute;left:580px;top:641px;width:249px;height:15px;background:#ffffff;border:1px solid #b0b0b0;box-sizing:border-box;"></div>
<div style="position:absolute;left:829px;top:641px;width:36px;height:15px;background:#dadada;"></div>
<div style="position:absolute;left:865px;top:641px;width:15px;height:15px;background:#ffffff;border:1px solid #b0b0b0;box-sizing:border-box;"></div>
<svg style="position:absolute;left:870px;top:645px;" width="5" height="8" viewBox="0 0 5 8"><path d="M0 0 V8 L4.5 4 Z" fill="#606060"/></svg>
<div style="position:absolute;left:17px;top:662px;width:884px;height:1px;background:#cfcfcf;"></div>
<div style="position:absolute;left:25.24px;top:667.74px;font-family:'Liberation Sans',sans-serif;font-size:12px;line-height:12px;font-weight:400;font-style:normal;color:#444;white-space:pre;transform:scaleX(0.9800);transform-origin:0 0;">Готово</div>
<svg style="position:absolute;left:83px;top:667px;" width="16" height="15" viewBox="0 0 16 15"><path d="M6 12.5 H0.5 V0.5 H13.5 V5" fill="none" stroke="#3c3c3c" stroke-width="1.1"/><path d="M0.5 2.5 H13.5 M2.5 6.5 H5.5 M2.5 8.5 H5.5" stroke="#3c3c3c"/><circle cx="10" cy="9.2" r="4.3" fill="#f3f2f1" stroke="#3c3c3c" stroke-width="1.2"/><circle cx="10" cy="9.2" r="2" fill="#3c3c3c"/></svg>
<div style="position:absolute;left:587px;top:663px;width:40px;height:21px;background:#d2d2d2;"></div>
<svg style="position:absolute;left:600px;top:666px;" width="14" height="14" viewBox="0 0 14 14"><rect x="0.5" y="0.5" width="12" height="12" fill="none" stroke="#444"/><path d="M4.5 0.5 V12.5 M8.5 0.5 V12.5 M0.5 4.5 H12.5 M0.5 8.5 H12.5" stroke="#444"/></svg>
<svg style="position:absolute;left:640px;top:666px;" width="15" height="14" viewBox="0 0 15 14"><rect x="0.6" y="0.6" width="12.8" height="11.8" fill="none" stroke="#3c3c3c" stroke-width="1.2"/><rect x="3.5" y="2.5" width="7" height="8" fill="none" stroke="#3c3c3c"/><path d="M5 4.5 H9 M5 6.5 H9 M5 8.5 H9" stroke="#3c3c3c"/></svg>
<svg style="position:absolute;left:680px;top:666px;" width="15" height="14" viewBox="0 0 15 14"><rect x="0.6" y="0.6" width="12.8" height="11.8" fill="none" stroke="#3c3c3c" stroke-width="1.2"/><path d="M0.5 7.5 H8.5 V0.5 M4.5 0.5 V7.5" fill="none" stroke="#3c3c3c"/></svg>
<div style="position:absolute;left:713px;top:672px;width:9px;height:1px;background:#3a3a3a;"></div>
<div style="position:absolute;left:726px;top:673px;width:100px;height:1px;background:#b0b0b0;"></div>
<div style="position:absolute;left:774px;top:668px;width:5px;height:11px;background:#707070;"></div>
<div style="position:absolute;left:831px;top:672px;width:9px;height:1px;background:#444;"></div>
<div style="position:absolute;left:835px;top:668px;width:1px;height:9px;background:#444;"></div>
<div style="position:absolute;left:852.44px;top:668.04px;font-family:'Liberation Sans',sans-serif;font-size:12px;line-height:12px;font-weight:400;font-style:normal;color:#444;white-space:pre;transform:scaleX(0.8763);transform-origin:0 0;">100 %</div>
<div style="position:absolute;left:16px;top:16px;width:886px;height:669px;border-radius:8px;border:1px solid #217346;border-top:none;box-sizing:border-box;pointer-events:none"></div></body></html>
